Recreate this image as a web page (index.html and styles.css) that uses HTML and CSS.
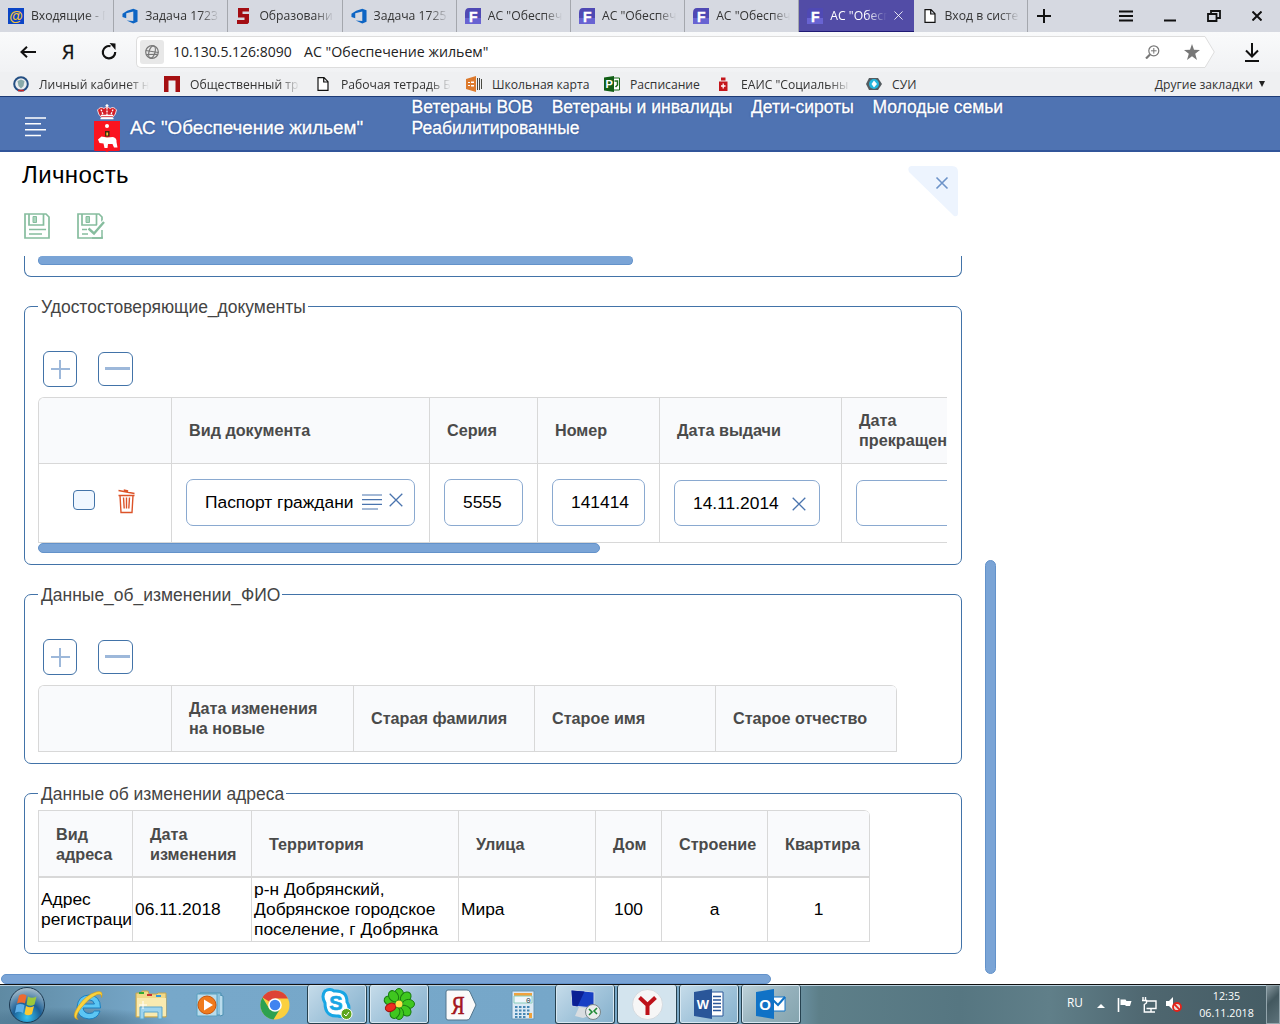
FILE: index.html
```html
<!DOCTYPE html>
<html lang="ru">
<head>
<meta charset="utf-8">
<title>АС "Обеспечение жильем"</title>
<link rel="stylesheet" href="styles.css">
</head>
<body>
<svg class="defs" width="0" height="0">
  <symbol id="i-f" viewBox="0 0 16 16"><path d="M4 0h12v16H0V5Q0 0 4 0z" fill="#4f49b4"/><path d="M0 10h16v6H0z" fill="#7a75e6" opacity=".6"/><text x="4" y="13.5" font-family="Liberation Sans, sans-serif" font-weight="bold" font-size="14" fill="#fff" stroke="#fff" stroke-width=".4">F</text></symbol>
  <symbol id="i-vs" viewBox="0 0 17 16"><path fill-rule="evenodd" d="M5.500 2.500 12 .3 16.500 2v12L12 16l-7-3.300 7 .6V3.300L4.500 5v5.500L.5 9V5.500z" fill="#0d65c4"/></symbol>
  <symbol id="i-doc" viewBox="0 0 16 16"><path d="M3 1.700h6l4 4v8.600H3zM8.700 1.700v4.300H13" fill="#fff" stroke="#111" stroke-width="1.200"/></symbol>
  <symbol id="i-x" viewBox="0 0 14 14"><path d="M.7.7l12.600 12.600M13.300.7.7 13.300" fill="none" stroke="currentColor" stroke-width="1.300"/></symbol>
  <symbol id="i-disk" viewBox="0 0 28 28"><path d="M1 1h21l3 3v21H1zM5 1v11h14.500V1" fill="none" stroke="currentColor" stroke-width="1.700"/><path d="M9 3.500h3.500v6H9z" fill="#a9d6bd" stroke="currentColor"/></symbol>
</svg>
<header class="tabs">
  <div class="tab"><svg class="fav" viewBox="0 0 16 16"><path fill="#0b45c6" d="M0 0h16v16H0z"/><text x="8" y="12.500" text-anchor="middle" font-family="Liberation Sans, sans-serif" font-weight="bold" font-size="14" fill="#f5c33b">@</text></svg><span>Входящие - П</span></div>
  <div class="tab"><svg class="fav"><use href="#i-vs"/></svg><span>Задача 1723</span></div>
  <div class="tab"><svg class="fav" viewBox="0 0 16 16"><path d="M2 0h11v3.500H6.500V6H13v8.500L11.500 16H1v-4h7.500V9.500H2z" fill="#a30d12"/></svg><span>Образовани</span></div>
  <div class="tab"><svg class="fav"><use href="#i-vs"/></svg><span>Задача 1725</span></div>
  <div class="tab"><svg class="fav"><use href="#i-f"/></svg><span>АС "Обеспеч</span></div>
  <div class="tab"><svg class="fav"><use href="#i-f"/></svg><span>АС "Обеспеч</span></div>
  <div class="tab"><svg class="fav"><use href="#i-f"/></svg><span>АС "Обеспеч</span></div>
  <div class="tab active"><svg class="fav"><use href="#i-f"/></svg><span>АС "Обесп</span><svg class="tabx"><use href="#i-x"/></svg></div>
  <div class="tab"><svg class="fav"><use href="#i-doc"/></svg><span>Вход в систе</span></div>
  <svg class="plus" viewBox="0 0 14 14"><path d="M7 0v14M0 7h14" stroke="#111" stroke-width="2"/></svg>
  <div class="winctl">
    <svg width="14" height="12" viewBox="0 0 14 12"><path d="M0 1.500h14M0 6h14M0 10.500h14" stroke="#111" stroke-width="2"/></svg>
    <svg width="12" height="12" viewBox="0 0 12 12"><path d="M0 10.500h12" stroke="#111" stroke-width="2"/></svg>
    <svg width="14" height="12" viewBox="0 0 14 12"><path d="M1 4h8.500v7H1zM4 4V1h9v7H9.500" fill="none" stroke="#111" stroke-width="1.800"/></svg>
    <svg width="10" height="10" viewBox="0 0 10 10"><path d="M.5.5l9 9M9.500.5l-9 9" stroke="#111" stroke-width="2"/></svg>
  </div>
</header>
<div class="toolbar">
  <svg class="t-back" viewBox="0 0 16 12"><path d="M16 6H1.500M7 .8 1.500 6 7 11.200" fill="none" stroke="#111" stroke-width="2"/></svg>
  <span class="t-ya">Я</span>
  <svg class="t-reload" viewBox="0 0 16 18"><path d="M9.500 4.200A6.200 6.200 0 1 0 14.200 10" fill="none" stroke="#111" stroke-width="2.200"/><path d="M8.500 1l6 .5v6.500z" fill="#111"/></svg>
  <div class="addr">
    <div class="globe"><svg width="14" height="14" viewBox="0 0 14 14" fill="none" stroke="#777" stroke-width="1.200"><circle cx="7" cy="7" r="6.300"/><ellipse cx="7" cy="7" rx="3" ry="6.300" transform="rotate(15 7 7)"/><path d="M.7 5.500l12.600 2M1.200 9.500l11-.2"/></svg></div>
    <span class="ip">10.130.5.126:8090</span><span class="ttl">АС "Обеспечение жильем"</span>
    <svg class="zoom" viewBox="0 0 15 14"><g fill="none" stroke="#777"><circle cx="8.800" cy="5.800" r="5" stroke-width="1.200"/><path d="M6 5.800h5.600M8.800 3v5.600"/><path d="M5 9.500 1 13.500" stroke-width="2.200"/></g></svg>
    <svg class="star" viewBox="0 0 16 16"><path d="M8 0l2 5.800 6 .2-4.800 3.700L13 16l-5-3.700L3 16l1.800-6.300L0 6l6-.2z" fill="#777"/></svg>
  </div>
  <svg class="tip" viewBox="0 0 10 32"><path d="M0 .5 9.300 16 0 31.500" fill="#fff" stroke="#ddd"/></svg>
  <svg class="down" viewBox="0 0 14 19"><path d="M7 0v13M1 7.500l6 6 6-6M0 18h14" fill="none" stroke="#111" stroke-width="2"/></svg>
</div>
<nav class="marks">
  <div class="mark m1"><svg viewBox="0 0 16 16"><circle cx="8" cy="8" r="6.800" fill="#e9edf0" stroke="#244f83" stroke-width="2"/><path d="M4.500 5 8 3.500 11.500 5 10.500 10 8 12.500 5.500 10z" fill="#8aa"/><path d="M5 14.500h6" stroke="#c22" stroke-width="1.500"/></svg><span class="fade">Личный кабинет н</span></div>
  <div class="mark m2"><svg viewBox="0 0 16 16"><path d="M0 0h16v16h-4.500V4.500h-7V16H0z" fill="#a50f12"/></svg><span class="fade">Общественный тр</span></div>
  <div class="mark m3"><svg><use href="#i-doc"/></svg><span class="fade">Рабочая тетрадь Б</span></div>
  <div class="mark m4"><svg viewBox="0 0 16 16"><path d="M0 3l10-3v16L0 13z" fill="#dd7a2d"/><path d="M2 6h2v1H2zM5 5.500h3v1.500H5zM2 9h2v1H2zM5 9h3v1.500H5z" fill="#fff"/><path d="M11.500 2v12M13.500 2v12M15.500 3v10" stroke="#4a4a42"/></svg><span>Школьная карта</span></div>
  <div class="mark m5"><svg viewBox="0 0 16 16"><path d="M9 2h6.500v12H9z" fill="#fff" stroke="#1b6b1b"/><path d="M0 1.500 10 0v16L0 14.500z" fill="#125f16"/><text x="1.500" y="12" font-family="Liberation Sans, sans-serif" font-weight="bold" font-size="11" fill="#fff">P</text><path d="M10.500 5h3v4l-2 2" fill="none" stroke="#1b6b1b" stroke-width="1.500"/></svg><span>Расписание</span></div>
  <div class="mark m6"><svg viewBox="0 0 16 16"><path d="M4 5.500h8.500V15H4z" fill="#c4161c"/><path d="M6 4.500V1.500h4.500v3" fill="#c4161c"/><path d="M8.200 7.500v5M6 10h4.500" stroke="#fff" stroke-width="1.300"/></svg><span class="fade">ЕАИС "Социальны</span></div>
  <div class="mark m7"><svg viewBox="0 0 16 16"><path d="M3 2h9l4 6-4 6H3L0 8z" fill="#555c60"/><circle cx="8" cy="8" r="5" fill="#24b4dc"/><path d="M8 4.500 11 8l-3 3.500L5.500 8z" fill="#fff"/></svg><span>СУИ</span></div>
  <div class="other"><span>Другие закладки</span><i></i></div>
</nav>
<div class="apphead">
  <svg class="burger" viewBox="0 0 22 20"><path d="M0 1h21M0 6.700h16M0 12.700h21M0 18.500h16" stroke="#fff" stroke-width="1.500"/></svg>
  <svg class="arms" viewBox="0 0 28 48"><path d="M4.500 6q3-4 6.500-1.500l3-2.500 3 2.500q3.500-2.500 6.500 1.500-.5 4.500-4 7.500H8.500Q5 10.500 4.500 6z" fill="#d51f28" stroke="#fff" stroke-width=".8"/><path d="M7.500 14.500h13M8 11.500h12" stroke="#fff" stroke-width="1.500"/><path d="M8 5.500l2 5M20 5.500l-2 5M14 3.500v8" stroke="#fff" stroke-width="1.300" stroke-dasharray="2 1"/><path d="M14 0v4M12.500 1.500h3" stroke="#fff" stroke-width="1.200"/><path d="M1 17h26v29q0 1-2 1h-9l-2 1-2-1H3q-2 0-2-1z" fill="#fa1420"/><circle cx="14" cy="22" r="2" fill="#fff"/><path d="M12 27h4.500v5.500H12z" fill="#3a2a10"/><path d="M13.300 28.500h1.800v3h-1.800z" fill="#f5c33b"/><path d="M5 35.500l3.500-3 5.500 1 6-.5q4 1 3.500 5l1 5.500h-3.500l-1.500-3.500h-4.500l-.5 4h-3l-1-4.500-4-.5z" fill="#fff"/></svg>
  <span class="brand">АС "Обеспечение жильем"</span>
  <nav class="menu"><a>Ветераны ВОВ</a><a>Ветераны и инвалиды</a><a>Дети-сироты</a><a>Молодые семьи</a><a>Реабилитированные</a></nav>
</div>
<main class="page">
  <div class="phead">
    <div class="pleft"><h1>Личность</h1>
      <div class="saves">
        <svg viewBox="0 0 28 28"><use href="#i-disk" width="28" height="28"/><path d="M5 16.500h17M5 21h13" stroke="currentColor" stroke-width="1.700"/></svg>
        <svg viewBox="0 0 28 28"><use href="#i-disk" width="28" height="28"/><path d="M12 20 26 7l3 14-4 3z" fill="#fff"/><path d="M5 16.500h5M5 21h6M25 17v8H15" fill="none" stroke="currentColor" stroke-width="1.500"/><path d="M11.500 15.500l5.500 5L27 9" fill="none" stroke="currentColor" stroke-width="2.400"/></svg>
      </div>
    </div>
    <svg class="corner" viewBox="0 0 50 51"><path d="M3 0h41q6 0 6 6v41q0 4-4 3L1 6Q-1 1 3 0z" fill="#edf4fe"/><path d="M28.500 11.500l11 11M39.500 11.500l-11 11" stroke="#6d93c8" stroke-width="1.600"/></svg>
  </div>
  <div class="work">
    <div class="col">
      <section class="box cut"><div class="sb s1"></div></section>
      <section class="box b2">
        <div class="legend">Удостостоверяющие_документы</div>
        <div class="btns"><b class="add"></b><b class="del"></b></div>
        <div class="clip"><div class="grid g1">
          <div class="th"></div><div class="th"><span>Вид документа</span></div><div class="th"><span>Серия</span></div><div class="th"><span>Номер</span></div><div class="th"><span>Дата выдачи</span></div><div class="th"><span>Дата<br>прекращен</span></div>
          <div class="td acts"><i class="chk"></i><svg class="bin" viewBox="0 0 17 25" fill="none" stroke="#dc5329" stroke-width="1.400"><path d="M.5 1.500 16.500 4.500M6.500 2.500V1.200l3 .6v1.200M.5 6.500h16M2 6.500l1 17h11l1-17M5.500 8.500l.7 11M8.500 8.500v11M11.500 8.500l-.7 11"/></svg></div>
          <div class="td"><div class="inp wide"><span>Паспорт граждани</span><svg class="lines" viewBox="0 0 21 16"><path d="M0 1h20M0 5.700h20M0 10.400h20M0 15h16" stroke="#4a74ae" stroke-width="1.200"/></svg><svg class="xx up"><use href="#i-x"/></svg></div></div>
          <div class="td"><div class="inp"><span>5555</span></div></div>
          <div class="td"><div class="inp"><span>141414</span></div></div>
          <div class="td"><div class="inp date"><span>14.11.2014</span><svg class="xx"><use href="#i-x"/></svg></div></div>
          <div class="td"><div class="inp date"></div></div>
        </div></div>
        <div class="sb s2"></div>
      </section>
      <section class="box b3">
        <div class="legend">Данные_об_изменении_ФИО</div>
        <div class="btns"><b class="add"></b><b class="del"></b></div>
        <div class="grid g2">
          <div class="th"></div><div class="th"><span>Дата изменения<br>на новые</span></div><div class="th"><span>Старая фамилия</span></div><div class="th"><span>Старое имя</span></div><div class="th"><span>Старое отчество</span></div>
        </div>
      </section>
      <section class="box b4">
        <div class="legend">Данные об изменении адреса</div>
        <div class="grid g3">
          <div class="th"><span>Вид<br>адреса</span></div><div class="th"><span>Дата<br>изменения</span></div><div class="th"><span>Территория</span></div><div class="th"><span>Улица</span></div><div class="th"><span>Дом</span></div><div class="th"><span>Строение</span></div><div class="th"><span>Квартира</span></div>
          <div class="tc"><span>Адрес<br>регистраци</span></div><div class="tc"><span>06.11.2018</span></div><div class="tc"><span>р-н Добрянский,<br>Добрянское городское<br>поселение, г Добрянка</span></div><div class="tc"><span>Мира</span></div><div class="tc mid"><span>100</span></div><div class="tc mid"><span>а</span></div><div class="tc mid"><span>1</span></div>
        </div>
      </section>
    </div>
    <div class="vsb"></div>
  </div>
  <div class="hsb"></div>
</main>
<footer class="task">
  <div class="ti orb"><svg width="38" height="38" viewBox="0 0 38 38"><defs><radialGradient id="orb" cx=".5" cy=".85" r=".8"><stop offset="0" stop-color="#35c4f2"/><stop offset=".5" stop-color="#1c5f96"/><stop offset="1" stop-color="#9fb8c8"/></radialGradient></defs><circle cx="19" cy="19" r="17.500" fill="url(#orb)" stroke="#1d3a52"/><path d="M11 9.500q4-2.500 7.500 0l-1.500 8q-4-2-8 0z" fill="#ec6a30"/><path d="M20 10.500q4 2.500 8.500 0l-2 8q-4 2.500-8 0z" fill="#9cc83c"/><path d="M8.500 19q4-2 8 0l-1.500 8q-4-2.500-8 0z" fill="#5fb0ea"/><path d="M18 20q4 2.500 8 0l-2 8q-4 2.500-7.500 0z" fill="#fcc932"/></svg></div>
  <div class="ti ie"><svg width="32" height="32" viewBox="0 0 32 32"><path fill-rule="evenodd" d="M28.500 19H11q1 5.500 6.500 5.500 3.500 0 5-2.500h5.500q-2.500 8-11 8Q5 29 5 18 6 6.500 17 6q11.500.5 11.500 13zM11 15h11.500q-1-4-5.500-4.300-5 .3-6 4.300z" fill="#5cc6f4" stroke="#1a7fc0"/><path d="M6 30.500Q-1.500 29 6 17.500T24 3q8-2 5.500 5.500.5-4.500-4.500-3Q17 9 9.500 18.500T6 30.500z" fill="#fbd23c" stroke="#d59a12" stroke-width=".6"/></svg></div>
  <div class="ti exp"><svg width="34" height="32" viewBox="0 0 34 32"><path d="M2 4h5l1-2h6l1 3h8l1-1h8v24H2z" fill="#f0d989" stroke="#c5a44c"/><path d="M3 9h29v18H3z" fill="#f9eab0"/><path d="M5 3h5v2H5z" fill="#3a3"/><path d="M13 5h5v2h-5z" fill="#c33"/><path d="M22 6h5v2h-5z" fill="#39d"/><path d="M6 18h22v12h-4v-7H10v7H6z" fill="#9ed4ee" stroke="#5ba5cc"/><path d="M9 12v8M5 16h8" stroke="#fff"/></svg></div>
  <div class="ti wmp"><svg width="30" height="26" viewBox="0 0 30 26"><path d="M4 1h21v22H4z" fill="#8fc4de" stroke="#4d90b2"/><path d="M24 3l3 1v19l-3 1" fill="#b9dcec" stroke="#4d90b2"/><path d="M1 2h20v22H1z" fill="#b9dcec" stroke="#5ba0bf"/><circle cx="11" cy="13" r="9" fill="#f07a1c" stroke="#c9560c"/><path d="M8 7.500 17 13l-9 5.500z" fill="#fff"/></svg></div>
  <div class="ti chr"><svg width="30" height="30" viewBox="0 0 30 30"><circle cx="15" cy="15" r="14.500" fill="#fbd03f"/><path d="M15 15 2.500 7.500A14.500 14.500 0 0 1 28 8.500H15z" fill="#dd4336"/><path d="M2.500 7.500A14.500 14.500 0 0 0 13.500 29.500L20 19l-10 1z" fill="#2da150"/><circle cx="15" cy="15" r="6.800" fill="#fff"/><circle cx="15" cy="15" r="5.300" fill="#4184f0"/></svg></div>
  <div class="ti on sk"><svg width="32" height="32" viewBox="0 0 32 32"><path d="M4 3q5-3 9 0 13-1 13 11 4 6 0 11-4 5-9 3Q4 29 4 15 0 8 4 3z" fill="#fff" stroke="#18a6e4" stroke-width="3"/><text x="15" y="22" text-anchor="middle" font-family="Liberation Sans, sans-serif" font-size="20" font-weight="bold" fill="#18a6e4" stroke="#18a6e4" stroke-width=".6">S</text><circle cx="25.500" cy="26" r="5.500" fill="#5da61c" stroke="#fff"/><path d="M23 26l2 2 3-4" fill="none" stroke="#fff"/></svg></div>
  <div class="ti on icq"><svg width="34" height="34" viewBox="0 0 34 34"><g fill="#3fc71f" stroke="#197b10"><ellipse id="pt" cx="17" cy="7.500" rx="4.600" ry="6"/><use href="#pt" transform="rotate(45 17 17)"/><use href="#pt" transform="rotate(90 17 17)"/><use href="#pt" transform="rotate(135 17 17)"/><use href="#pt" transform="rotate(180 17 17)"/><use href="#pt" transform="rotate(290 17 17)"/><use href="#pt" transform="rotate(205 17 17)"/><use href="#pt" transform="rotate(325 17 17)"/></g><ellipse cx="17" cy="8" rx="4" ry="5.500" transform="rotate(248 17 17)" fill="#ed2a20" stroke="#a01510"/><circle cx="17" cy="17" r="3.500" fill="#ffe14a"/></svg></div>
  <div class="ti yn"><svg width="32" height="32" viewBox="0 0 32 32"><path d="M3 1h19q2 0 3 2l6 13-6 13q-1 2-3 2H3q-2 0-2-2V3q0-2 2-2z" fill="#fafafa" stroke="#52758c"/><text transform="translate(13 24.500) scale(.75 1)" text-anchor="middle" font-family="Liberation Serif, serif" font-size="26" fill="#a3151b" stroke="#a3151b" stroke-width=".7">Я</text></svg></div>
  <div class="ti calc"><svg width="24" height="30" viewBox="0 0 24 30"><path d="M1 1h22v28H1z" fill="#dbe9f4" stroke="#6996b5"/><path d="M3 3h18v3H3z" fill="#f0a23c"/><path d="M3 6h18v7H3z" fill="#eef6fb" stroke="#8cb"/><text x="15" y="13" font-size="8" font-family="Liberation Mono, monospace" fill="#234">0</text><path d="M4 17h16M4 20.500h16M4 24h16M4 27h12" stroke="#4687b3" stroke-width="2" stroke-dasharray="2.500 1.500"/><path d="M18 23h3v5h-3z" fill="#f0a23c"/></svg></div>
  <div class="ti on rdp"><svg width="34" height="32" viewBox="0 0 34 32"><path d="M3 2l23 2v16L4 18z" fill="#173fc4" stroke="#cdd8e4"/><path d="M3.500 2.500l13 1-7 15-5-1z" fill="#0b1f94"/><path d="M11 19l7 1 3 8-6 2-8-2z" fill="#d9dde0"/><circle cx="25" cy="24" r="7.500" fill="#e9eceb" stroke="#7a8589"/><path d="M21 21l3 3-3 3M29 20l-3 3 3 3" fill="none" stroke="#1f8a34" stroke-width="1.600"/></svg></div>
  <div class="ti on yb"><svg width="31" height="31" viewBox="0 0 31 31"><circle cx="15.500" cy="15.500" r="15" fill="#f6f6f6" stroke="#c9cfd3" stroke-width=".6"/><path d="M7.500 8.500l8 7.500 8-7.500M15.500 15v11" fill="none" stroke="#bd1119" stroke-width="4"/></svg></div>
  <div class="ti on wd"><svg width="30" height="30" viewBox="0 0 30 30"><path d="M16 3h13v24H16z" fill="#fff" stroke="#2a5699"/><path d="M19 7.500h8M19 11h8M19 14.500h8M19 18h8M19 21.500h8" stroke="#2a5699" stroke-width="1.500"/><path d="M0 3l18-3v30L0 27z" fill="#2a5699"/><text x="9" y="20" text-anchor="middle" font-family="Liberation Sans, sans-serif" font-weight="bold" font-size="13" fill="#fff">W</text></svg></div>
  <div class="ti on ol"><svg width="30" height="30" viewBox="0 0 30 30"><path d="M14 8h15v14H14z" fill="#fff" stroke="#1072c6"/><path d="M14 8l8 8 7-8" fill="none" stroke="#1072c6" stroke-width="2"/><path d="M0 3l18-3v30L0 27z" fill="#1072c6"/><text x="9" y="20.500" text-anchor="middle" font-family="Liberation Sans, sans-serif" font-weight="bold" font-size="15" fill="#fff">O</text></svg></div>
  <div class="tray"><span class="lang">RU</span><i class="up"></i>
    <svg width="16" height="16" viewBox="0 0 16 16"><path d="M1.500 1v14" stroke="#fff" stroke-width="1.600"/><path d="M3.500 2.500h5l1 1.500h5l-1.500 5H9L8 8H3.500z" fill="#fff"/></svg>
    <svg width="16" height="16" viewBox="0 0 16 16"><path d="M5.500 4H15v7.500H5.500M2 0v3M4.500 0v3M1 3.500h4.500V6L3.300 7.500V15H14M10 12v3" fill="none" stroke="#fff" stroke-width="1.400"/></svg>
    <svg width="17" height="17" viewBox="0 0 17 17"><path d="M1 5h3l4-4v13l-4-4H1z" fill="#fff"/><circle cx="12" cy="11" r="4" fill="#e9ddd9" stroke="#e2231a" stroke-width="1.800"/><path d="M9.200 8.200l5.600 5.600" stroke="#e2231a" stroke-width="1.800"/></svg>
  </div>
  <div class="clock"><span>12:35</span><span>06.11.2018</span></div>
  <div class="show"></div>
</footer>
</body>
</html>
```
FILE: styles.css
```css
* { box-sizing: border-box; }
html, body { margin: 0; height: 1024px; overflow: hidden; }
body { width: 1280px; display: flex; flex-direction: column; background: #fff; font-family: "Liberation Sans", sans-serif; color: #000; }
svg { display: block; flex: none; }
.defs { display: none; }

/* browser chrome */
.tabs, .toolbar, .marks { font-family: "Open Sans", sans-serif; flex: none; }
.tabs { height: 32px; display: flex; align-items: center; background: #d6d9e1; font-size: 12.200px; color: #333; }
.tab { flex: none; width: 114.200px; height: 32px; display: flex; align-items: center; gap: 7px; padding: 0 6px 0 8px; border-right: 1px solid #a4a7ad; white-space: nowrap; }
.tab span { flex: 1; line-height: 20px; min-width: 0; -webkit-mask-image: linear-gradient(90deg, #000 72%, transparent 98%); mask-image: linear-gradient(90deg, #000 72%, transparent 98%); }
.fav { width: 16px; height: 16px; }
.tab.active { background: #524ca6; color: #fff; border-right: 0; border-bottom: 1px solid #1f1a74; }
.tab.active span { -webkit-mask-image: linear-gradient(90deg, #000 65%, transparent); mask-image: linear-gradient(90deg, #000 65%, transparent); }
.tabx { width: 9px; height: 9px; color: #fff; margin-right: 5px; }
.plus { width: 14px; height: 14px; margin-left: 9px; }
.winctl { display: flex; align-items: center; margin-left: 68px; gap: 31px; }

.toolbar { height: 40px; display: flex; align-items: center; background: linear-gradient(#f9fafb, #f1f2f4); font-size: 14px; color: #222; }
.t-back { width: 16px; height: 12px; margin-left: 20px; }
.t-ya { width: 14px; margin-left: 26px; font-size: 20px; line-height: 24px; color: #111; -webkit-text-stroke: .3px #111; }
.t-reload { width: 16px; height: 18px; margin: 0 0 3px 25px; }
.addr { width: 1069px; height: 32px; margin-left: 19px; display: flex; align-items: center; background: #fff; border: 1px solid #ddd; border-right: 0; border-radius: 5px 0 0 5px; white-space: nowrap; }
.addr span { padding-bottom: 2px; }
.globe { width: 24px; height: 24px; margin-left: 3px; background: #e8e8e8; border-radius: 3px; display: grid; place-items: center; }
.ip { margin-left: 9px; width: 131px; }
.ttl { width: 190px; font-size: 14.200px; }
.zoom { width: 15px; height: 14px; margin-left: auto; }
.star { width: 16px; height: 16px; margin: 0 5px 0 24px; }
.tip { width: 10px; height: 32px; }
.down { width: 14px; height: 19px; margin-left: 30px; }

.marks { height: 24px; display: flex; background: #eff0f2; font-size: 12.150px; color: #333; }
.mark { display: flex; align-items: center; gap: 10px; white-space: nowrap; flex: none; height: 24px; }
.mark svg { width: 16px; height: 16px; }
.mark .fade { -webkit-mask-image: linear-gradient(90deg, #000 80%, transparent); mask-image: linear-gradient(90deg, #000 80%, transparent); }
.m1 { width: 151px; padding-left: 13px; }
.m1 .fade { width: 110px; }
.m2 { width: 164px; padding-left: 13px; }
.m2 .fade { width: 110px; }
.m3 { width: 151px; }
.m3 .fade { width: 110px; }
.m4 { width: 138px; }
.m5 { width: 111px; }
.m6 { width: 151px; }
.m6 .fade { width: 110px; }
.other { margin-left: auto; margin-right: 15px; display: flex; align-items: center; gap: 6px; }
.other i { border: 3px solid transparent; border-top: 6px solid #222; border-bottom: 0; }

/* application header */
.apphead { height: 56px; flex: none; display: flex; background: #4f73b2; border-top: 1px solid #1c3a75; border-bottom: 2px solid #31559a; color: #fff; text-shadow: 0 0 2px #1e3f80; -webkit-text-stroke: .3px #fff; }
.burger { width: 22px; height: 20px; margin: 20px 0 0 25px; }
.arms { width: 28px; height: 48px; margin: 7px 0 0 46px; }
.brand { margin: 20px 0 0 9px; width: 282px; font-size: 18.800px; line-height: 21px; white-space: nowrap; }
.menu { width: 640px; margin-left: -.4px; display: flex; flex-wrap: wrap; align-content: flex-start; column-gap: 18.700px; font-size: 17.500px; line-height: 21px; white-space: nowrap; }

/* form */
.page { height: 832px; flex: none; display: flex; flex-direction: column; }
.phead { height: 104px; flex: none; width: 958px; display: flex; justify-content: space-between; }
.pleft { padding-left: 22px; }
h1 { margin: 9px 0 0; font-size: 24px; letter-spacing: .4px; font-weight: 400; line-height: 28px; }
.saves { display: flex; gap: 25px; margin: 24px 0 0 2px; color: #86bd9e; }
.saves svg { width: 28px; height: 28px; }
.corner { width: 50px; height: 51px; margin-top: 14px; }
.work { height: 718px; flex: none; display: flex; padding-left: 24px; }
.col { width: 938px; }
.box { border: 1px solid #4273a8; border-radius: 7px; padding: 0 13px; }
.cut { height: 21px; border-top: 0; border-radius: 0 0 7px 7px; }
.sb, .vsb, .hsb { background: #7aa4d6; border: 1px solid #6392ca; border-radius: 6px; }
.sb { height: 10px; }
.s1 { width: 595px; height: 9px; border-radius: 5px; border-top: 0; }
.s2 { width: 562px; }
.b2 { height: 259px; margin-top: 29px; }
.b3 { height: 170px; margin-top: 29px; }
.b4 { height: 161px; margin-top: 29px; }
.legend { width: fit-content; height: 20px; margin-top: -10px; padding: 0 2px 0 3px; background: #fff; color: #444; font-size: 17.480px; line-height: 20px; white-space: nowrap; }
.btns { display: flex; align-items: center; gap: 21px; margin: 34px 0 0 5px; height: 36px; }
.btns b { border: 1px solid #4273a8; border-radius: 6px; width: 34px; height: 36px; background: linear-gradient(#9db8da, #9db8da) 50% 50% / 19px 2px no-repeat, linear-gradient(#9db8da, #9db8da) 50% 50% / 2px 19px no-repeat; }
.btns .del { width: 35px; height: 34px; background: linear-gradient(#9db8da, #9db8da) 6px 14px / 25px 3px no-repeat; }
.clip { width: 909px; overflow: hidden; margin-top: 10px; }
.grid { display: grid; border: 1px solid #d8d8d8; border-right: 0; border-bottom: 0; border-radius: 6px 6px 0 0; width: fit-content; overflow: hidden; }
.th { background: #f9fafc; color: #4a4a4a; font-weight: 700; font-size: 16.200px; line-height: 20px; white-space: nowrap; display: flex; align-items: center; padding: 0 17px 2px; border-right: 1px solid #d8d8d8; border-bottom: 1px solid #d8d8d8; }
.g1 { grid-template-columns: 133px 258px 108px 122px 182px 182px; grid-template-rows: 66px 79px; }
.td { border-right: 1px solid #d8d8d8; border-bottom: 1px solid #d8d8d8; padding: 15px 14px 0; }
.acts { display: flex; padding-left: 34px; }
.chk { width: 22px; height: 20px; margin-top: 11px; border: 1px solid #4273a8; border-radius: 4px; background: #f0f7ff; }
.bin { width: 17px; height: 25px; margin: 10px 0 0 23px; }
.inp { height: 47px; border: 1px solid #8aa9d0; border-radius: 7px; display: flex; align-items: center; padding-left: 18px; font-size: 17.400px; white-space: nowrap; }
.inp span { margin-top: -1px; }
.td .inp { width: 100%; }
.td .wide { width: 229px; }
.td .date { height: 46px; margin-top: 1px; width: 146px; }
.date span { margin-top: 0; }
.wide span { width: 157px; }
.lines { width: 21px; height: 16px; margin-top: -2px; }
.xx { width: 14px; height: 14px; color: #4a74ae; margin-left: 6px; }
.date .xx { margin-left: auto; margin-right: 13px; margin-top: 2px; }
.xx.up { margin-top: -5px; }
.b3 .grid { margin-top: 10px; border-radius: 6px 6px 0 0; grid-template-columns: 133px 182px 181px 181px 181px; grid-template-rows: 66px; }
.b4 .grid { margin-top: 6px; border-radius: 0 6px 0 0; grid-template-columns: 94px 119px 207px 137px 66px 106px 102px; grid-template-rows: 67px 64px; }
.b4 .th { border-bottom-width: 2px; padding-bottom: 0; }
.tc { display: flex; align-items: center; padding: 0 0 2px 2px; font-size: 17.400px; line-height: 20px; border-right: 1px solid #d8d8d8; border-bottom: 1px solid #d8d8d8; white-space: nowrap; }
.mid { justify-content: center; padding-left: 0; }
.vsb { width: 11px; height: 414px; margin: 304px 0 0 23px; }
.hsb { width: 770px; height: 10px; margin-left: 1px; }

/* taskbar */
.task { height: 40px; flex: none; display: flex; border-top: 1px solid #111; box-shadow: inset 0 1px #b9d0dd; background: radial-gradient(ellipse 110px 16px at 65px 38px, #47708b, transparent), linear-gradient(90deg, #5f8aa3, #77a8ca 12%, #76a7c9 45%, #7faac4 60%, #5d7f89 64%, #567681 75%, #607f89 82%, #4e666f 90%, #455c64); color: #fff; font-family: "Open Sans", sans-serif; }
.ti { flex: none; width: 62px; display: grid; place-items: center; }
.ti.on { width: 60px; margin: 0 1px; border: 1px solid #26414f; border-top: 0; box-shadow: inset 0 0 0 1px #d7e8f2; border-radius: 3px; background: linear-gradient(135deg, #c6dcea, #a3c5db 50%, #86b1cd); }
.ti.ol { background: linear-gradient(135deg, #c0d3da, #96b2bd 50%, #84a4ae); }
.orb { width: 53px; }
.ie { width: 70px; }
.exp { width: 55px; }
.wmp { width: 65px; }
.chr { width: 63px; }
.ti.yb { background: #d3e4ee; }
.tray { margin-left: auto; display: flex; align-items: center; gap: 8px; width: 115px; font-size: 12px; }
.lang { width: 23px; font-size: 11.800px; padding-bottom: 5px; }
.tray .up { border: 4px solid transparent; border-bottom: 4px solid #fff; border-top: 0; margin: 3px 4px 0 0; }
.clock { width: 84px; padding: 3px 0 0 5px; display: flex; flex-direction: column; align-items: center; font-size: 10.700px; line-height: 17px; }
.show { width: 14px; border: 1px solid #93a5ac; background: linear-gradient(135deg, #86979e, #43585f 40%, #5d727a); }
```
